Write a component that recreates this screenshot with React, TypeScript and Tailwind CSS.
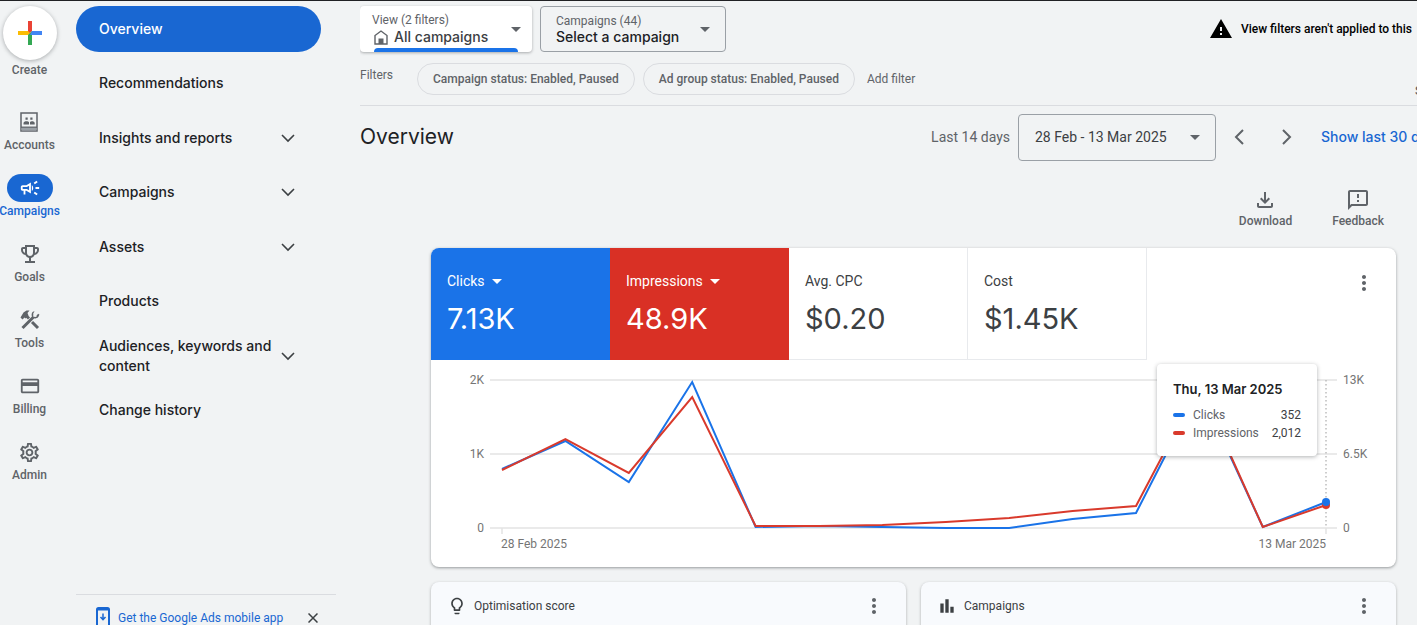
import type { ReactNode } from "react";
import {
  MdArrowDropDown,
  MdBarChart,
  MdMoreVert,
  MdOutlineCampaign,
  MdOutlineCreditCard,
  MdOutlineEmojiEvents,
  MdOutlineFeedback,
  MdOutlineFileDownload,
  MdOutlineLightbulb,
  MdOutlineSettings,
  MdWarning,
} from "react-icons/md";

function AccountsIcon() {
  return (
    <svg width="18" height="20" viewBox="0 0 18 20" fill="none" aria-hidden="true">
      <path d="M1 1h16v18H1z" stroke="#5f6368" strokeWidth="1.5" />
      <path d="M1.500 15.500h15V18.500h-15z" fill="#9aa0a6" />
      <path d="M1 15.200h16" stroke="#5f6368" strokeWidth="1.300" />
      <path d="M5.500 5.500h2.200v2.200H5.500zM10.300 5.500h2.200v2.200h-2.200z" fill="#5f6368" />
      <path d="M3.500 12.500v-1.300C3.500 9.800 5 9.200 6.600 9.200c1 0 1.900.2 2.400.8v2.500zM10 12.500V10c.5-.6 1-.8 1.800-.8 1.500 0 2.900.6 2.900 2v1.300z" fill="#5f6368" />
    </svg>
  );
}

function ToolsIcon() {
  return (
    <svg width="20" height="20" viewBox="0 0 20 20" fill="none" stroke="#5f6368" aria-hidden="true">
      <path d="M2.500 18 13.500 7" strokeWidth="3" />
      <path d="M12 12 18 18" strokeWidth="3" />
      <path d="M5 4.500 9 8.500" strokeWidth="3" />
      <path d="M.5 7.500 3.500 2.500 6.500.5H9.500L7.500 3 8.500 5.500 5.500 8.500 4.500 7.500 2.500 9.500z" fill="#5f6368" stroke="none" />
      <path d="M15.500 1.200A3.600 3.600 0 1 0 18.800 4.800L16.300 7 13.200 6.800 13.300 3.700z" fill="#5f6368" stroke="none" />
      <path d="M15.500.3 13.800 3.500 16.400 5.500 19.500 4" stroke="#f1f3f4" strokeWidth="1" fill="#f1f3f4" />
      <path d="M16.800 6.800 18.800 4.300" strokeWidth="1.800" />
    </svg>
  );
}

function HomeIcon() {
  return (
    <svg width="14" height="15" viewBox="0 0 14 15" fill="none" aria-hidden="true">
      <path d="M1 14V5.500L7 1l6 4.500V14z" stroke="#5f6368" strokeWidth="1.400" />
      <path d="M4.500 8.500h5V14h-5z" fill="#5f6368" />
    </svg>
  );
}

function PhoneIcon() {
  return (
    <svg width="14" height="22" viewBox="0 0 14 22" fill="none" aria-hidden="true">
      <rect x="1" y="1" width="12" height="20" rx="1.500" stroke="#1967d2" strokeWidth="2" />
      <path d="M1 1.500h12v2H1z" fill="#1967d2" />
      <path d="M7 6.500v6M4.500 10 7 12.700 9.500 10" stroke="#1967d2" strokeWidth="1.500" />
    </svg>
  );
}

function PlusIcon() {
  return (
    <svg width="24" height="24" viewBox="0 0 24 24" aria-hidden="true">
      <path d="M10 0h4v10l-4 4z" fill="#ea4335" />
      <path d="M0 10h10l2 2-2 2H0z" fill="#fbbc04" />
      <path d="M10 14l4-4v14h-4z" fill="#34a853" />
      <path d="M14 10h10v4H12z" fill="#4285f4" />
    </svg>
  );
}

function Chevron({ dir }: { dir: "down" | "left" | "right" }) {
  const paths = { down: "M2 5l6 6 6-6", left: "M11 1 4 8l7 7", right: "M5 1l7 7-7 7" };
  return (
    <svg
      width="16"
      height="16"
      viewBox="0 0 16 16"
      fill="none"
      stroke={dir === "down" ? "#3c4043" : "#5f6368"}
      strokeWidth={dir === "down" ? 1.6 : 2}
      className="shrink-0"
      aria-hidden="true"
    >
      <path d={paths[dir]} />
    </svg>
  );
}

const railItems: { label: string; icon: ReactNode; active?: boolean }[] = [
  { label: "Accounts", icon: <AccountsIcon /> },
  { label: "Campaigns", icon: <MdOutlineCampaign size={22} />, active: true },
  { label: "Goals", icon: <MdOutlineEmojiEvents size={24} /> },
  { label: "Tools", icon: <ToolsIcon /> },
  { label: "Billing", icon: <MdOutlineCreditCard size={22} /> },
  { label: "Admin", icon: <MdOutlineSettings size={23} /> },
];

const navItems = [
  { label: "Overview", active: true },
  { label: "Recommendations" },
  { label: "Insights and reports", expandable: true },
  { label: "Campaigns", expandable: true },
  { label: "Assets", expandable: true },
  { label: "Products" },
  { label: "Audiences, keywords and content", expandable: true },
  { label: "Change history" },
];

const metrics = [
  { label: "Clicks", value: "7.13K", style: "bg-[#1a73e8] text-white", menu: true },
  { label: "Impressions", value: "48.9K", style: "bg-[#d93025] text-white", menu: true },
  { label: "Avg. CPC", value: "$0.20", style: "border-r border-b border-[#e8eaed] text-[#3c4043]" },
  { label: "Cost", value: "$1.45K", style: "border-r border-b border-[#e8eaed] text-[#3c4043]" },
];

// one value per day, as plot heights
const clicks = [97, 69, 110, 10, 155, 154, 155, 156, 156, 147, 141, 17, 155, 130];
const impressions = [98, 67, 101, 25, 154, 154, 153, 150, 146, 139, 134, 14, 155, 133];

const toPoints = (values: number[]) => values.map((y, i) => `${(12 + i * 63.4).toFixed(1)},${y}`).join(" ");

function Rail() {
  return (
    <nav aria-label="Sections" className="flex w-[59px] shrink-0 flex-col items-center pt-[5px] text-xs font-medium text-[#5f6368]">
      <button className="flex flex-col items-center">
        <span className="flex size-[54px] items-center justify-center rounded-full bg-white shadow-[0_1px_4px_rgba(60,64,67,0.4)]">
          <PlusIcon />
        </span>
        <span className="leading-5">Create</span>
      </button>
      <div className="mt-7 flex flex-col items-center gap-5">
        {railItems.map((item) => (
          <a key={item.label} href="#" className={`flex flex-col items-center ${item.active ? "text-[#1967d2]" : ""}`}>
            <span className={`flex h-7 w-[46px] items-center justify-center rounded-full ${item.active ? "bg-[#1967d2] text-white" : ""}`}>
              {item.icon}
            </span>
            <span className="leading-[18px]">{item.label}</span>
          </a>
        ))}
      </div>
    </nav>
  );
}

function Sidebar() {
  return (
    <aside className="ml-[17px] flex w-[260px] shrink-0 flex-col justify-between pt-[5px]">
      <nav aria-label="Campaigns" className="mr-[15px] flex h-[427px] flex-col justify-between font-['Inter',sans-serif] text-sm leading-5 font-medium">
        {navItems.map((item) => (
          <a
            key={item.label}
            href="#"
            className={`flex h-[46px] items-center justify-between rounded-full pr-[25px] pl-[23px] ${item.active ? "bg-[#1967d2] text-white" : "text-[#202124]"}`}
          >
            <span>{item.label}</span>
            {item.expandable && <Chevron dir="down" />}
          </a>
        ))}
      </nav>
      <div className="flex h-[31px] items-start border-t border-[#dadce0] pt-3 pr-[15px] pl-5">
        <a href="#" className="flex items-start gap-2 text-xs leading-[22px] whitespace-nowrap text-[#1967d2]">
          <PhoneIcon />
          Get the Google Ads mobile app
        </a>
        <button aria-label="Dismiss" className="ml-auto flex h-[22px] w-4 items-center justify-center">
          <svg width="10" height="10" viewBox="0 0 10 10" stroke="#3c4043" strokeWidth="1.500">
            <path d="M.5.5l9 9M9.500.5l-9 9" />
          </svg>
        </button>
      </div>
    </aside>
  );
}

function ScopeBar() {
  return (
    <div className="flex items-start pt-[5px]">
      <button className="relative flex h-[46px] w-[172px] items-center justify-between rounded bg-white pr-1 pl-3 text-left shadow-[0_1px_3px_rgba(60,64,67,0.4)]">
        <span>
          <span className="block text-xs leading-4 text-[#5f6368]">View (2 filters)</span>
          <span className="flex items-center gap-1.5 pl-0.5 font-['Inter',sans-serif] text-sm leading-[18px] font-medium text-[#3c4043]">
            <HomeIcon />
            All campaigns
          </span>
        </span>
        <MdArrowDropDown size={24} className="text-[#5f6368]" />
        <span className="absolute right-3.5 bottom-0 left-3.5 h-1 rounded-t bg-[#1a73e8]" />
      </button>
      <button className="ml-2 flex h-[46px] w-[186px] items-center justify-between rounded border border-[#9aa0a6] pr-2 pl-[15px] text-left">
        <span>
          <span className="block text-xs leading-4 text-[#5f6368]">Campaigns (44)</span>
          <span className="block font-['Inter',sans-serif] text-sm leading-4 font-medium text-[#202124]">Select a campaign</span>
        </span>
        <MdArrowDropDown size={24} className="text-[#5f6368]" />
      </button>
      <div className="ml-auto flex h-[46px] w-[207px] items-center gap-2 text-xs font-medium whitespace-nowrap text-black">
        <MdWarning size={24} className="-ml-px shrink-0" />
        View filters aren't applied to this
      </div>
    </div>
  );
}

function FilterBar() {
  return (
    <div className="flex h-[54px] border-b border-[#dadce0] pt-[11px] text-xs text-[#5f6368]">
      <span className="w-[57px] leading-6">Filters</span>
      <button className="h-8 rounded-full border border-[#dadce0] px-[15px] font-medium">Campaign status: Enabled, Paused</button>
      <button className="ml-2 h-8 rounded-full border border-[#dadce0] px-[15px] font-medium">Ad group status: Enabled, Paused</button>
      <button className="ml-3 h-8">Add filter</button>
      <button className="mt-4 ml-auto h-6 w-0.5 overflow-hidden font-medium">Save</button>
    </div>
  );
}

function Heading() {
  return (
    <div className="flex h-[62px] items-center">
      <h1 className="font-['Inter',sans-serif] text-[21px] text-[#202124]">Overview</h1>
      <span className="ml-auto text-sm text-[#5f6368]">Last 14 days</span>
      <button className="ml-2 flex h-[47px] w-[198px] items-center justify-between rounded border border-[#9aa0a6] pr-2 pl-4 text-sm text-[#3c4043]">
        28 Feb - 13 Mar 2025
        <MdArrowDropDown size={24} className="text-[#5f6368]" />
      </button>
      <button aria-label="Previous period" className="ml-4"><Chevron dir="left" /></button>
      <button aria-label="Next period" className="ml-[30px]"><Chevron dir="right" /></button>
      <a href="#" className="ml-[27px] w-24 overflow-hidden font-['Inter',sans-serif] text-sm font-medium whitespace-nowrap text-[#1967d2]">
        Show last 30 days
      </a>
    </div>
  );
}

function Chart() {
  return (
    <div className="grid grid-cols-[53px_1fr_53px] gap-x-1.5 pt-3 pb-[15px] text-xs leading-4 text-[#757575]">
      <div className="flex h-[164px] flex-col justify-between text-right">
        <span>2K</span>
        <span>1K</span>
        <span>0</span>
      </div>
      <div className="relative h-[164px]">
        <svg viewBox="0 0 847 164" preserveAspectRatio="none" fill="none" className="size-full" role="img" aria-label="Clicks and impressions by day">
          <path d="M0 8h847M0 82h847M0 156h847M12 156v6M836 156v6" stroke="#e4e4e4" strokeWidth="1.500" vectorEffect="non-scaling-stroke" />
          <path d="M836 8v148" stroke="#bdbdbd" strokeWidth="1.500" strokeDasharray="1.500 2.500" vectorEffect="non-scaling-stroke" />
          <polyline points={toPoints(clicks)} stroke="#1a73e8" strokeWidth="2" vectorEffect="non-scaling-stroke" />
          <polyline points={toPoints(impressions)} stroke="#d93a2c" strokeWidth="2" vectorEffect="non-scaling-stroke" />
          <path d="M836 133h.01" stroke="#d93a2c" strokeWidth="8" strokeLinecap="round" vectorEffect="non-scaling-stroke" />
          <path d="M836 130h.01" stroke="#1a73e8" strokeWidth="8" strokeLinecap="round" vectorEffect="non-scaling-stroke" />
        </svg>
        <div className="absolute -top-2 right-5 h-[92px] w-40 rounded bg-white px-4 pt-4 shadow-[0_1px_4px_rgba(60,64,67,0.4)]">
          <p className="font-['Inter',sans-serif] text-[13px] leading-[18px] font-semibold text-[#202124]">Thu, 13 Mar 2025</p>
          <dl className="mt-2 grid grid-cols-[20px_1fr_auto] items-center text-xs leading-[18px] text-[#5f6368]">
            <span className="h-1 w-3 rounded-sm bg-[#1a73e8]" />
            <dt>Clicks</dt>
            <dd className="text-right text-[#3c4043]">352</dd>
            <span className="h-1 w-3 rounded-sm bg-[#d93a2c]" />
            <dt>Impressions</dt>
            <dd className="text-right text-[#3c4043]">2,012</dd>
          </dl>
        </div>
      </div>
      <div className="flex flex-col justify-between">
        <span>13K</span>
        <span>6.5K</span>
        <span>0</span>
      </div>
      <div className="col-start-2 flex justify-between px-[11px]">
        <span>28 Feb 2025</span>
        <span>13 Mar 2025</span>
      </div>
    </div>
  );
}

function PerformanceCard() {
  return (
    <section className="overflow-hidden rounded-lg bg-white shadow-[0_1px_3px_rgba(60,64,67,0.5)]">
      <div className="flex">
        {metrics.map((metric) => (
          <button key={metric.label} className={`h-28 w-[179px] px-4 text-left ${metric.style}`}>
            <span className="flex items-center text-sm leading-5">
              {metric.label}
              {metric.menu && <MdArrowDropDown size={24} className="-my-0.5" />}
            </span>
            <span className="mt-2.5 block font-['Inter',sans-serif] text-[29px] leading-9">{metric.value}</span>
          </button>
        ))}
        <button aria-label="More options" className="mt-[23px] mr-5 ml-auto size-6 text-[#5f6368]">
          <MdMoreVert size={24} />
        </button>
      </div>
      <Chart />
    </section>
  );
}

function SmallCard({ title, icon }: { title: string; icon: ReactNode }) {
  return (
    <section className="h-80 rounded-lg bg-[#f8fafd] shadow-[0_1px_3px_rgba(60,64,67,0.4)]">
      <header className="flex h-[47px] items-center gap-[7px] pr-5 pl-4 text-[#3c4043]">
        {icon}
        <h2 className="text-xs">{title}</h2>
        <button aria-label="More options" className="ml-auto text-[#5f6368]">
          <MdMoreVert size={24} />
        </button>
      </header>
    </section>
  );
}

export default function App() {
  return (
    <div className="flex h-screen overflow-hidden border-t border-[#202124] bg-[#f1f3f4] font-['Roboto',sans-serif]">
      <Rail />
      <Sidebar />
      <main className="ml-6 min-w-0 flex-1 overflow-hidden">
        <div className="-ml-1 pl-1">
          <ScopeBar />
          <FilterBar />
          <Heading />
        </div>
        <div className="mr-[21px] ml-[71px]">
          <div className="flex h-20 justify-end gap-10 pt-5 pr-3 text-xs font-medium text-[#5f6368]">
            <button className="flex flex-col items-center gap-px self-start">
              <MdOutlineFileDownload size={24} />
              Download
            </button>
            <button className="flex flex-col items-center gap-px self-start">
              <MdOutlineFeedback size={24} />
              Feedback
            </button>
          </div>
          <PerformanceCard />
          <div className="mt-[15px] grid grid-cols-2 gap-[15px]">
            <SmallCard title="Optimisation score" icon={<MdOutlineLightbulb size={20} />} />
            <SmallCard title="Campaigns" icon={<MdBarChart size={20} />} />
          </div>
        </div>
      </main>
    </div>
  );
}
